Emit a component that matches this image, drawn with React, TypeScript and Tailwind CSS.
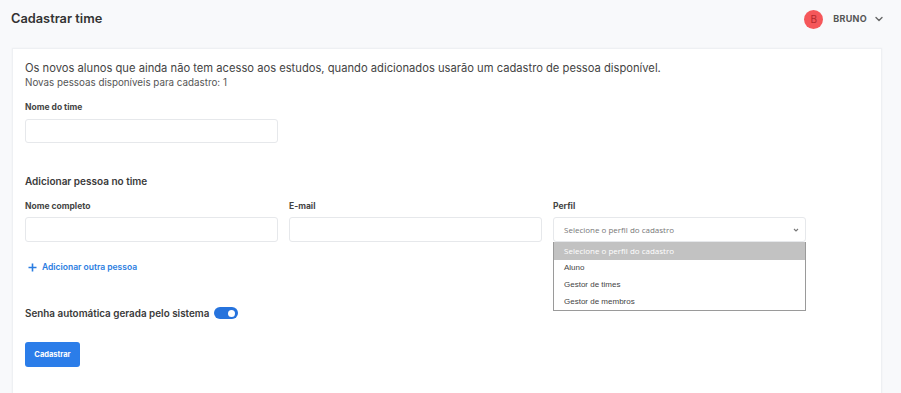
import React from "react";

export default function App() {
  return (
    <div className="w-[901px] h-[393px] overflow-hidden bg-[#f8f9fb] font-['Inter',sans-serif] text-[#3b3b3b]">
      <div className="flex items-center justify-between h-[38px] pl-[11px] pr-[17px]">
        <h1 className="text-[12.8px] font-semibold text-[#333]">Cadastrar time</h1>
        <div className="flex items-center">
          <div className="w-[19px] h-[19px] rounded-full bg-[#f5575a] flex items-center justify-center text-[10px] text-[#b32a2d]">B</div>
          <span className="ml-[10px] text-[9px] font-bold tracking-[0.3px] text-[#555]">BRUNO</span>
          <svg className="ml-[7px]" width="10" height="10" viewBox="0 0 10 10" fill="none">
            <path d="M2 3.5 L5 6.5 L8 3.5" stroke="#666" strokeWidth="1.4" strokeLinecap="round" strokeLinejoin="round" />
          </svg>
        </div>
      </div>
      <div className="ml-[12px] mr-[19px] mt-[10px] h-[400px] bg-white border border-[#eef0f3] shadow-[0_0_2px_rgba(0,0,0,0.04)] pl-[12px] pt-[12px]">
        <p className="text-[11.2px] leading-[15px] text-[#444]">Os novos alunos que ainda não tem acesso aos estudos, quando adicionados usarão um cadastro de pessoa disponível.</p>
        <p className="text-[9.8px] leading-[13px] text-[#555]">Novas pessoas disponíveis para cadastro: 1</p>
        <label className="block mt-[12px] text-[8.5px] leading-[12px] font-bold text-[#444]">Nome do time</label>
        <div className="mt-[6px] w-[253px] h-[24px] border border-[#e6e8eb] rounded-[3px]" />
        <h2 className="mt-[31px] text-[10px] leading-[14px] font-semibold text-[#3a3a3a]">Adicionar pessoa no time</h2>
        <div className="mt-[12px] flex gap-[11px]">
          <div className="w-[253px]">
            <label className="block text-[8.5px] leading-[12px] font-bold text-[#444]">Nome completo</label>
            <div className="mt-[5px] h-[25px] border border-[#e6e8eb] rounded-[3px]" />
          </div>
          <div className="w-[253px]">
            <label className="block text-[8.5px] leading-[12px] font-bold text-[#444]">E-mail</label>
            <div className="mt-[5px] h-[25px] border border-[#e6e8eb] rounded-[3px]" />
          </div>
          <div className="w-[253px]">
            <label className="block text-[8.5px] leading-[12px] font-bold text-[#444]">Perfil</label>
            <div className="relative mt-[5px]">
              <div className="h-[25px] border border-[#e6e8eb] rounded-[3px] flex items-center justify-between pl-[10px] pr-[5px] font-['Open_Sans',sans-serif] text-[8px] text-[#777]">
                <span>Selecione o perfil do cadastro</span>
                <svg width="8" height="8" viewBox="0 0 8 8" fill="none">
                  <path d="M2 3 L4 5 L6 3" stroke="#777" strokeWidth="1.1" />
                </svg>
              </div>
              <div className="absolute left-0 top-full w-[253px] bg-white border border-[#9a9a9a] border-t-0 font-['Liberation_Sans',sans-serif] text-[8px] text-[#444]">
                <div className="h-[18px] bg-[#c2c2c2] text-white flex items-center pl-[10px] font-['Open_Sans',sans-serif]">Selecione o perfil do cadastro</div>
                <div className="h-[16.5px] flex items-center pl-[10px]">Aluno</div>
                <div className="h-[16.5px] flex items-center pl-[10px]">Gestor de times</div>
                <div className="h-[17px] flex items-center pl-[10px]">Gestor de membros</div>
              </div>
            </div>
          </div>
        </div>
        <div className="mt-[19px] h-[12px] flex items-center text-[#2a7de1]">
          <svg width="9" height="9" viewBox="0 0 9 9" className="ml-[3px]">
            <path d="M4.5 0.5 V8.5 M0.5 4.5 H8.5" stroke="#2a7de1" strokeWidth="1.6" />
          </svg>
          <span className="ml-[5px] text-[8.5px] font-semibold">Adicionar outra pessoa</span>
        </div>
        <div className="mt-[33px] h-[14px] flex items-center">
          <span className="text-[9.9px] font-semibold text-[#3a3a3a]">Senha automática gerada pelo sistema</span>
          <div className="ml-[5px] w-[24px] h-[12px] rounded-full bg-[#2673dd] flex items-center justify-end pr-[3px]">
            <div className="w-[7px] h-[7px] rounded-full bg-white" />
          </div>
        </div>
        <button className="block mt-[22px] w-[55px] h-[25px] bg-[#2b7de9] rounded-[3px] text-white text-[7.5px] font-bold">Cadastrar</button>
      </div>
    </div>
  );
}
